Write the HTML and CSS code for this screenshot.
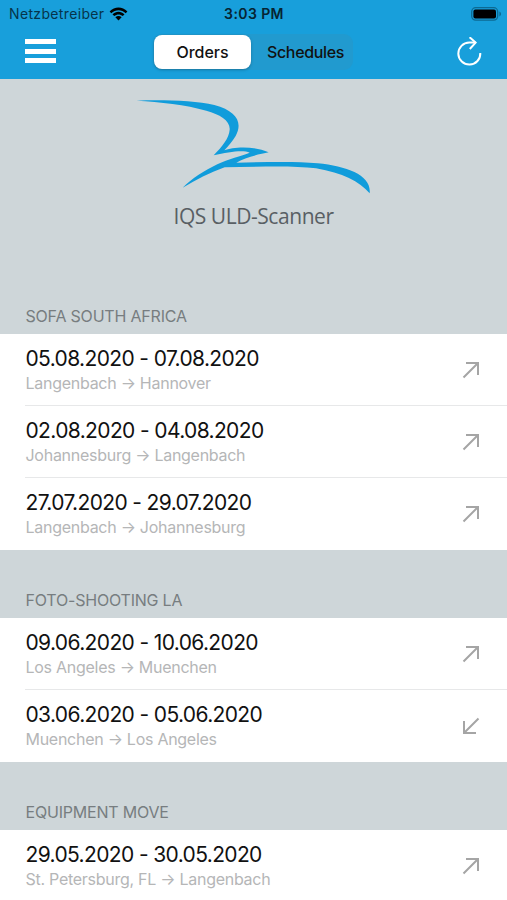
FILE: index.html
```html
<!DOCTYPE html>
<html lang="en">
<head>
    <meta charset="UTF-8">
    <meta name="viewport" content="width=device-width, initial-scale=1.0">
    <title>IQS ULD-Scanner</title>
    <link rel="stylesheet" href="styles.css">
</head>
<body>
    <header>
        <div class="status">
            <div class="carrier">
                <span>Netzbetreiber</span>
                <svg class="wifi" width="19" height="14" viewBox="0 0 19 14">
                    <path d="M0.6 4.5 C5.6 -0.7 13.4 -0.7 18.4 4.5 L16.7 6.2 C12.6 2.1 6.4 2.1 2.3 6.2 Z"/>
                    <path d="M3.5 7.4 C6.9 4 12.1 4 15.5 7.4 L13.7 9.1 C11.3 6.8 7.7 6.8 5.3 9.1 Z"/>
                    <path d="M6.4 10.3 C8.2 8.6 10.8 8.6 12.6 10.3 L9.5 13.4 Z"/>
                </svg>
            </div>
            <div class="time">3:03 PM</div>
            <svg class="battery" width="31" height="14" viewBox="0 0 31 14">
                <rect x="0.7" y="0.7" width="26" height="12.4" rx="4" fill="none" stroke="#0c6a93" stroke-width="1.3"/>
                <rect x="2.4" y="2.4" width="22.6" height="9" rx="2" fill="#000"/>
                <path d="M28.4 4.6 C30.6 5.4 30.6 8.6 28.4 9.4 Z" fill="#0c6a93"/>
            </svg>
        </div>
        <nav>
            <div class="menu"><span></span><span></span><span></span></div>
            <div class="tabs">
                <div class="tab active">Orders</div>
                <div class="tab">Schedules</div>
            </div>
            <svg class="reload" width="26" height="30" viewBox="0 0 26 30">
                <path d="M19.6 5.6 H13.3 A11 11 0 1 0 24.3 16"/>
                <path d="M13.6 0.2 L19.6 5.6 L13.8 12"/>
            </svg>
        </nav>
    </header>
    <main>
        <div class="logo">
            <svg width="270" height="115" viewBox="0 0 810 345">
                <path d="M50 47 C130 44 225 47 283 60 C350 78 369 112 347 153 C337 170 324 184 313 196 C340 185 402 182 446 202 C418 207 374 218 349 233 C430 232 520 228 593 235 C682 244 755 271 749 325 C718 289 668 264 588 250 C510 240 405 246 314 247 C270 262 230 284 188 308 C216 280 253 257 292 238 C324 222 365 213 389 203 C371 194 327 200 281 211 C306 184 327 161 329 134 C331 107 300 88 259 77 C197 59 120 51 50 47 Z"/>
            </svg>
            <h1>IQS ULD-Scanner</h1>
        </div>
        <section>
            <h2>SOFA SOUTH AFRICA</h2>
            <div class="row">
                <div class="order">
                    <div class="date">05.08.2020 - 07.08.2020</div>
                    <div class="route">Langenbach → Hannover</div>
                </div>
                <svg class="arrow" viewBox="0 0 18 18"><path d="M1.5 16.5 L16 2 M4 2 H16 V14"/></svg>
            </div>
            <div class="row">
                <div class="order">
                    <div class="date">02.08.2020 - 04.08.2020</div>
                    <div class="route">Johannesburg → Langenbach</div>
                </div>
                <svg class="arrow" viewBox="0 0 18 18"><path d="M1.5 16.5 L16 2 M4 2 H16 V14"/></svg>
            </div>
            <div class="row">
                <div class="order">
                    <div class="date">27.07.2020 - 29.07.2020</div>
                    <div class="route">Langenbach → Johannesburg</div>
                </div>
                <svg class="arrow" viewBox="0 0 18 18"><path d="M1.5 16.5 L16 2 M4 2 H16 V14"/></svg>
            </div>
        </section>
        <section>
            <h2>FOTO-SHOOTING LA</h2>
            <div class="row">
                <div class="order">
                    <div class="date">09.06.2020 - 10.06.2020</div>
                    <div class="route">Los Angeles → Muenchen</div>
                </div>
                <svg class="arrow" viewBox="0 0 18 18"><path d="M1.5 16.5 L16 2 M4 2 H16 V14"/></svg>
            </div>
            <div class="row">
                <div class="order">
                    <div class="date">03.06.2020 - 05.06.2020</div>
                    <div class="route">Muenchen → Los Angeles</div>
                </div>
                <svg class="arrow" viewBox="0 0 18 18"><path d="M16.5 1.5 L2 16 M2 4 V16 H14"/></svg>
            </div>
        </section>
        <section>
            <h2>EQUIPMENT MOVE</h2>
            <div class="row">
                <div class="order">
                    <div class="date">29.05.2020 - 30.05.2020</div>
                    <div class="route">St. Petersburg, FL → Langenbach</div>
                </div>
                <svg class="arrow" viewBox="0 0 18 18"><path d="M1.5 16.5 L16 2 M4 2 H16 V14"/></svg>
            </div>
        </section>
    </main>
</body>
</html>
```

FILE: styles.css
```css
body {
    font-family: Inter, "Liberation Sans", sans-serif;
    margin: 0;
    height: 900px;
    overflow: hidden;
    background-color: #ced6d9;
    color: #111;
}

header {
    height: 79px;
    background-color: #189fdb;
}

.status {
    display: grid;
    grid-template-columns: 1fr auto 1fr;
    align-items: center;
    height: 27px;
    padding: 0 5px 0 9px;
    box-sizing: border-box;
    font-size: 14px;
}

.carrier {
    display: flex;
    align-items: center;
    gap: 5px;
    color: #06344a;
    letter-spacing: 0.35px;
}

.wifi {
    fill: #000;
}

.time {
    margin-right: 3px;
    font-weight: 600;
    letter-spacing: 0.4px;
    color: #062433;
}

.battery {
    justify-self: end;
}

nav {
    display: flex;
    align-items: center;
    height: 50px;
    padding: 0 25px;
}

.menu {
    display: flex;
    flex-direction: column;
    gap: 4.5px;
    width: 31px;
    padding-bottom: 2px;
}

.menu span {
    height: 5px;
    background-color: #fff;
}

.tabs {
    display: flex;
    width: 200px;
    height: 36px;
    margin-left: 97px;
    padding: 1px;
    box-sizing: border-box;
    border-radius: 9px;
    background-color: #219acf;
}

.tab {
    flex: 1;
    padding-left: 8px;
    line-height: 34px;
    text-align: center;
    font-size: 16px;
    font-weight: 500;
    letter-spacing: -0.35px;
}

.tab.active {
    flex: none;
    width: 97px;
    padding-left: 0;
    border-radius: 8px;
    background-color: #fff;
    box-shadow: 0 1px 3px rgba(0, 0, 0, 0.25);
    letter-spacing: 0;
}

.reload {
    margin-left: auto;
    fill: none;
    stroke: #fff;
    stroke-width: 2;
}

.logo {
    height: 187px;
    padding-top: 6px;
    text-align: center;
}

.logo svg {
    display: block;
    margin-left: 120px;
    fill: #109cdb;
}

h1 {
    margin: 0;
    line-height: 33px;
    font-family: "Open Sans", "Noto Sans", sans-serif;
    font-size: 21px;
    font-weight: 400;
    letter-spacing: -0.45px;
    color: #595f64;
}

h2 {
    display: flex;
    align-items: flex-end;
    height: 68px;
    margin: 0;
    padding: 0 25.5px 8px;
    box-sizing: border-box;
    line-height: 20px;
    font-size: 16px;
    font-weight: 400;
    letter-spacing: -0.2px;
    color: #777d80;
}

section:first-of-type h2 {
    height: 62px;
}

.row {
    display: flex;
    align-items: center;
    justify-content: space-between;
    height: 72px;
    padding-right: 27px;
    padding-left: 25.5px;
    background: linear-gradient(#e7e8e9, #e7e8e9) 25px 100% / 100% 1px no-repeat #fff;
}

.row:last-child {
    background: #fff;
}

.order {
    padding-bottom: 1px;
}

.date {
    line-height: 28px;
    font-size: 21px;
    letter-spacing: -0.63px;
}

.route {
    line-height: 21px;
    font-size: 16px;
    letter-spacing: -0.27px;
    color: #b5b6b7;
}

.arrow {
    width: 18px;
    height: 18px;
    fill: none;
    stroke: #a5a5a5;
    stroke-width: 2;
}
```
